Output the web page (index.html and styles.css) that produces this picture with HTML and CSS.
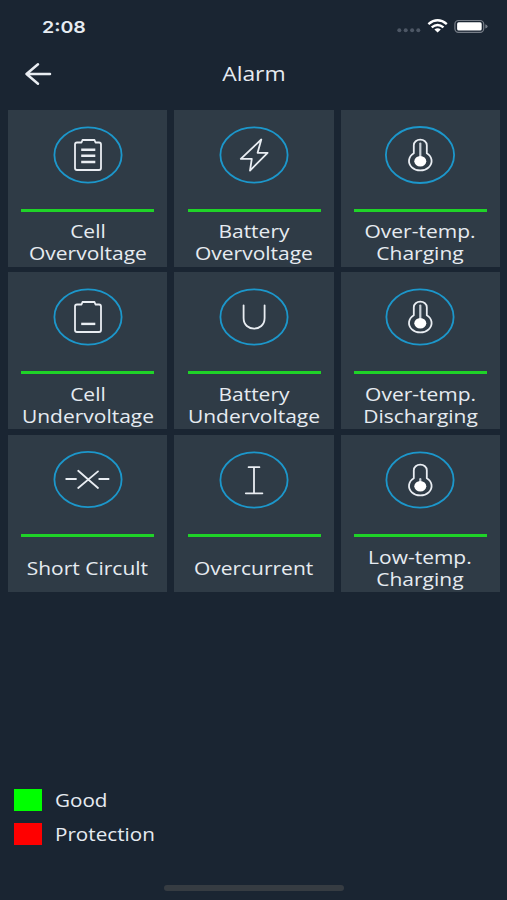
FILE: index.html
```
<!DOCTYPE html>
<html lang="en">
<head>
  <meta charset="UTF-8">
  <meta name="viewport" content="width=device-width, initial-scale=1.0">
  <title>Alarm</title>
  <link rel="stylesheet" href="styles.css">
</head>
<body>

  <!-- Status Bar -->
  <div class="status-bar">
    <span class="time"><span class="wide">2:08</span></span>
    <svg class="status-icons" width="92" height="16" viewBox="0 0 92 16">
      <g fill="#4d5765">
        <circle cx="3.3" cy="12.2" r="2"/>
        <circle cx="9.7" cy="12.2" r="2"/>
        <circle cx="16.1" cy="12.2" r="2"/>
        <circle cx="22.3" cy="12.2" r="2"/>
      </g>
      <g fill="none" stroke="#fff" stroke-width="2.5">
        <path d="M32.4 6.1Q41.6 -1.5 50.8 6.1"/>
        <path d="M35.7 9.4Q41.6 4.6 47.5 9.4"/>
      </g>
      <path d="M38.4 11.5Q41.6 9 44.8 11.5L41.6 14.5Z" fill="#fff"/>
      <rect x="58.9" y="2.5" width="28.8" height="11.8" rx="3.6" fill="none" stroke="#777e88" stroke-width="1.2"/>
      <rect x="61.1" y="4.3" width="24.6" height="8.2" rx="1.6" fill="#fff"/>
      <path d="M89.3 6.2Q91.6 7 91.6 8.4T89.3 10.6Z" fill="#777e88"/>
    </svg>
  </div>

  <!-- Header -->
  <header class="header">
    <a class="back-btn" href="#" aria-label="Back">
      <svg width="28" height="24" viewBox="0 0 28 24">
        <path d="M26 12H2.5M14 2.3L2.5 12L14 21.7" fill="none" stroke="#e9edf2" stroke-width="2.5" stroke-linecap="round" stroke-linejoin="round"/>
      </svg>
    </a>
    <h1 class="title"><span class="wide">Alarm</span></h1>
  </header>

  <!-- Alarm Cards -->
  <main class="alarm-grid">
    <div class="card">
      <svg class="icon" viewBox="0 0 72 60">
        <ellipse class="ring" cx="36" cy="30" rx="33.6" ry="27.6"/>
        <path d="M29.5 17.5H25Q23 17.5 23 19.5V43Q23 45 25 45H47Q49 45 49 43V19.5Q49 17.5 47 17.5H43.5L42.5 15H30.5Z"/>
        <path class="bold" d="M29.2 24.8H43.3M29.2 30.8H43.3M29.2 37H43.3"/>
      </svg>
      <div class="state"></div>
      <p class="label"><span class="wide">Cell<br>Overvoltage</span></p>
    </div>
    <div class="card">
      <svg class="icon" viewBox="0 0 72 60">
        <ellipse class="ring" cx="36" cy="30" rx="33.6" ry="27.6"/>
        <path d="M43.3 14.5L22.8 33.8H33.8L32 45.6L49.6 27.8H39.6Z"/>
      </svg>
      <div class="state"></div>
      <p class="label"><span class="wide">Battery<br>Overvoltage</span></p>
    </div>
    <div class="card">
      <svg class="icon" viewBox="0 0 72 60">
        <ellipse class="ring" cx="36" cy="30" rx="34.1" ry="28"/>
        <path d="M29.8 28.2V20.3A6.5 5.7 0 0 1 42.8 20.3V28.2A11.3 9.5 0 1 1 29.8 28.2Z"/>
        <path class="stem" d="M36.3 18.5V34"/>
        <ellipse class="bulb" cx="36.3" cy="36.3" rx="6" ry="5.2"/>
      </svg>
      <div class="state"></div>
      <p class="label"><span class="wide">Over-temp.<br>Charging</span></p>
    </div>
    <div class="card">
      <svg class="icon" viewBox="0 0 72 60">
        <ellipse class="ring" cx="36" cy="30" rx="33.6" ry="27.6"/>
        <path d="M29.5 17.5H25Q23 17.5 23 19.5V43Q23 45 25 45H47Q49 45 49 43V19.5Q49 17.5 47 17.5H43.5L42.5 15H30.5Z"/>
        <path class="bold" d="M29.2 36.9H43.3"/>
      </svg>
      <div class="state"></div>
      <p class="label"><span class="wide">Cell<br>Undervoltage</span></p>
    </div>
    <div class="card">
      <svg class="icon" viewBox="0 0 72 60">
        <ellipse class="ring" cx="36" cy="30" rx="33.6" ry="27.6"/>
        <path d="M25.6 18.3V31C25.6 45.2 46.6 45.2 46.6 31V18.3"/>
      </svg>
      <div class="state"></div>
      <p class="label"><span class="wide">Battery<br>Undervoltage</span></p>
    </div>
    <div class="card">
      <svg class="icon" viewBox="0 0 72 60">
        <ellipse class="ring" cx="36" cy="30" rx="33.6" ry="27.6"/>
        <path d="M29.8 28.2V20.3A6.5 5.7 0 0 1 42.8 20.3V28.2A11.3 9.5 0 1 1 29.8 28.2Z"/>
        <path class="stem" d="M36.3 18.5V34"/>
        <ellipse class="bulb" cx="36.3" cy="36.3" rx="6" ry="5.2"/>
      </svg>
      <div class="state"></div>
      <p class="label"><span class="wide">Over-temp.<br>Discharging</span></p>
    </div>
    <div class="card">
      <svg class="icon" viewBox="0 0 72 60">
        <ellipse class="ring" cx="36" cy="29.5" rx="33.6" ry="27.6"/>
        <path d="M26.2 20.8L46 38M46 21.4L26.2 38M14.2 29H24M47.2 29H56.6"/>
      </svg>
      <div class="state"></div>
      <p class="label"><span class="wide">Short Circult</span></p>
    </div>
    <div class="card">
      <svg class="icon" viewBox="0 0 72 60">
        <ellipse class="ring" cx="36" cy="30" rx="33.6" ry="27.6"/>
        <path d="M30.6 17.2H41.4M27.8 43.3H44.4M36 17.2V43.3"/>
      </svg>
      <div class="state"></div>
      <p class="label"><span class="wide">Overcurrent</span></p>
    </div>
    <div class="card">
      <svg class="icon" viewBox="0 0 72 60">
        <ellipse class="ring" cx="36" cy="30" rx="33.6" ry="27.6"/>
        <path d="M29.8 28.2V20.3A6.5 5.7 0 0 1 42.8 20.3V28.2A11.3 9.5 0 1 1 29.8 28.2Z"/>
        <path class="stem" d="M36.3 29V34"/>
        <ellipse class="bulb" cx="36.3" cy="36.3" rx="6" ry="5.2"/>
      </svg>
      <div class="state"></div>
      <p class="label"><span class="wide">Low-temp.<br>Charging</span></p>
    </div>
  </main>

  <!-- Legend -->
  <footer class="legend">
    <div class="legend-item">
      <span class="swatch good"></span>
      <span class="wide">Good</span>
    </div>
    <div class="legend-item">
      <span class="swatch protection"></span>
      <span class="wide">Protection</span>
    </div>
  </footer>
  <div class="home-indicator"></div>

</body>
</html>
```
FILE: styles.css
```
/* General Styles */
* {
  box-sizing: border-box;
}
body {
  font-family: 'Open Sans', 'Noto Sans', sans-serif;
  font-size: 17.8px;
  margin: 0;
  height: 900px;
  background: #1a2532;
  color: #e6ebf1;
  display: flex;
  flex-direction: column;
  overflow: hidden;
}
.wide {
  display: inline-block;
  transform: scaleX(1.18);
}

/* Status Bar */
.status-bar {
  height: 52px;
  padding: 0 19px 0 42px;
  display: flex;
  justify-content: space-between;
  align-items: center;
}
.time {
  font-family: Inter, sans-serif;
  font-size: 16.6px;
  font-weight: 600;
  padding-top: 1px;
}
.time .wide {
  transform-origin: left;
}

/* Header */
.header {
  height: 57.5px;
  padding: 0 24px 14px;
  display: grid;
  grid-template-columns: 28px 1fr 28px;
  align-items: center;
}
.back-btn {
  display: flex;
}
.title {
  margin: 0;
  font-size: 19.4px;
  font-weight: 400;
  text-align: center;
}

/* Alarm Cards */
.alarm-grid {
  display: grid;
  grid-template-columns: repeat(3, 1fr);
  grid-auto-rows: 157.3px;
  gap: 5.4px 6.8px;
  padding: 0 7px 0 8px;
}
.card {
  background: #2f3b46;
  padding-top: 15.3px;
  display: flex;
  flex-direction: column;
  align-items: center;
}
.icon {
  width: 72px;
  height: 60px;
  fill: none;
  stroke: #e9edf2;
  stroke-width: 1.8;
  stroke-linecap: round;
  stroke-linejoin: round;
}
.icon .ring {
  stroke: #1c97cb;
  stroke-width: 1.8;
}
.icon .bold {
  stroke-width: 2.4;
  stroke-linecap: butt;
}
.icon .stem {
  stroke: #c9d0d7;
  stroke-width: 2.2;
}
.icon .bulb {
  fill: #fff;
  stroke: none;
}
.state {
  width: 133px;
  height: 3px;
  margin-top: 23.8px;
  background: #1fd328;
}
.label {
  flex: 1;
  margin: 0;
  padding-top: 6px;
  display: flex;
  align-items: center;
  text-align: center;
  line-height: 22px;
  white-space: nowrap;
}

/* Legend */
.legend {
  margin-top: auto;
  padding: 0 14px;
  display: flex;
  flex-direction: column;
  gap: 11.5px;
  font-size: 17.5px;
}
.legend-item {
  height: 22px;
  display: flex;
  align-items: center;
  gap: 13px;
}
.legend-item .wide {
  transform-origin: left;
}
.swatch {
  width: 27.5px;
  height: 22px;
}
.good {
  background: #00ff00;
}
.protection {
  background: #ff0000;
}
.home-indicator {
  width: 180px;
  height: 6px;
  margin: 40.5px auto 9px;
  border-radius: 3px;
  background: #363c42;
}
```
